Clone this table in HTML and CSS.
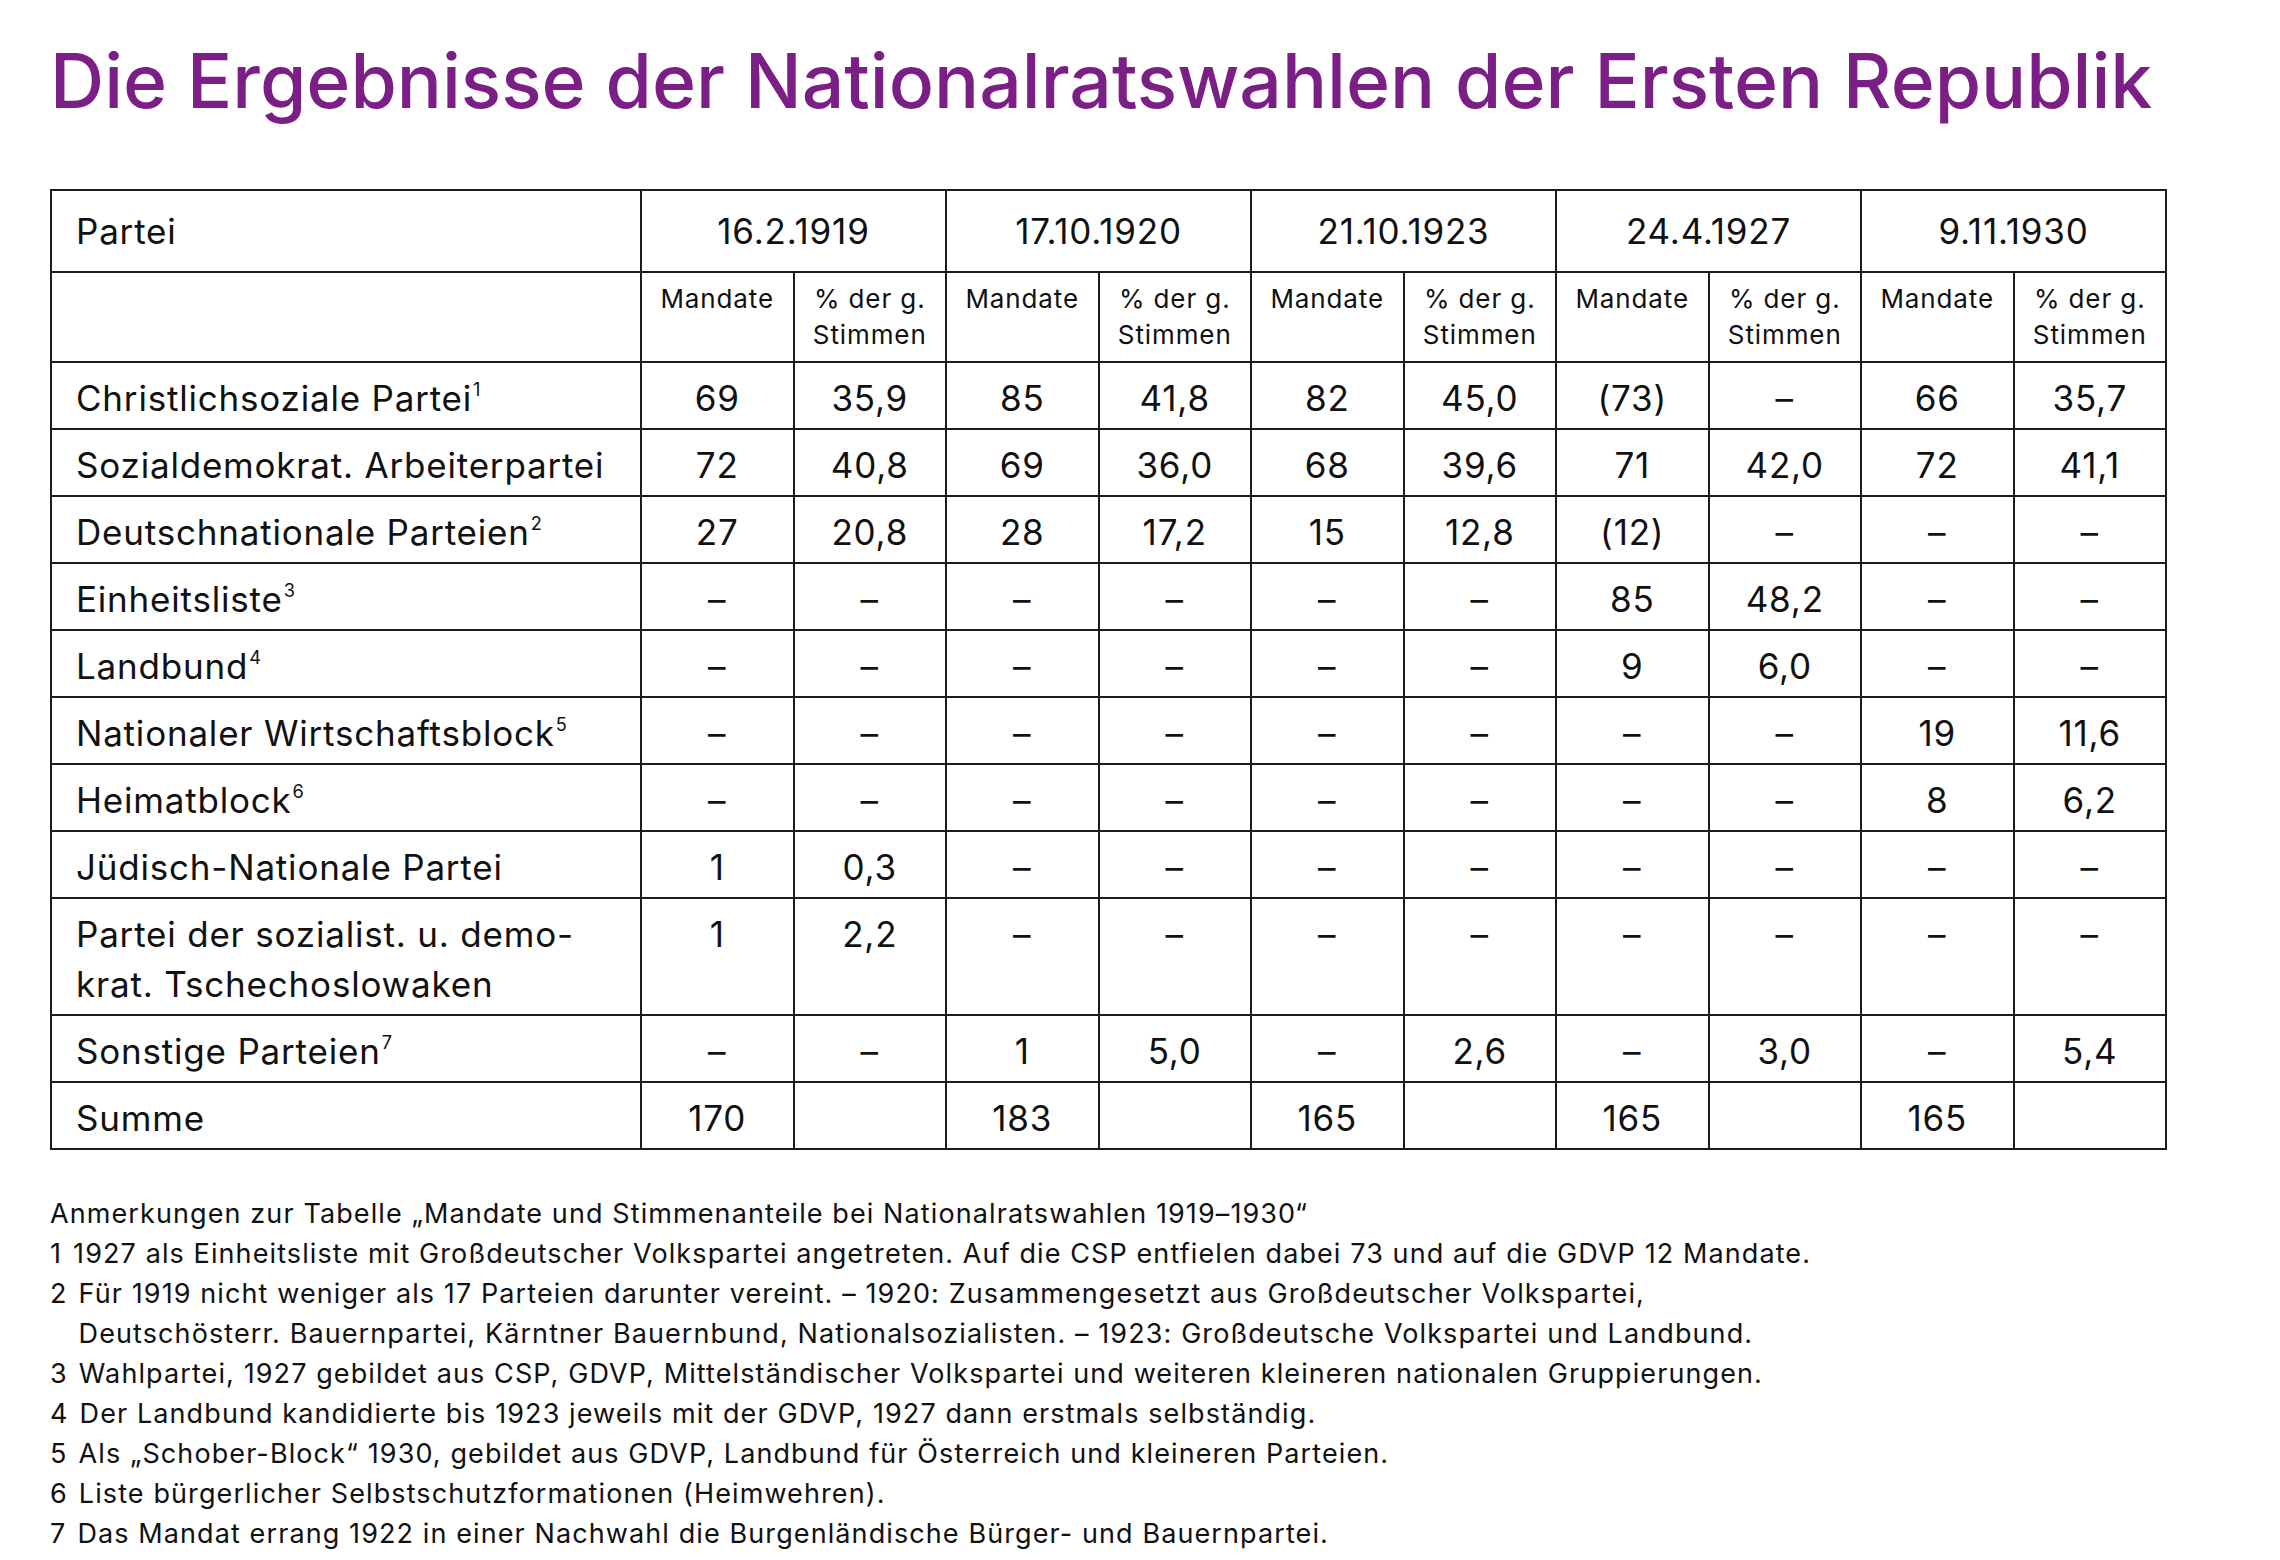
FILE: index.html
```html
<!DOCTYPE html>
<html lang="de">
<head>
<meta charset="utf-8">
<title>Die Ergebnisse der Nationalratswahlen der Ersten Republik</title>
<link rel="stylesheet" href="styles.css">
</head>
<body>
<main class="page">
  <h1 class="title">Die Ergebnisse der Nationalratswahlen der Ersten Republik</h1>

  <table class="results">
    <colgroup>
      <col class="col-party">
      <col><col><col><col><col><col><col><col><col><col>
    </colgroup>
    <thead>
      <tr class="row-dates">
        <th class="party">Partei</th>
        <th colspan="2">16.2.1919</th>
        <th colspan="2">17.10.1920</th>
        <th colspan="2">21.10.1923</th>
        <th colspan="2">24.4.1927</th>
        <th colspan="2">9.11.1930</th>
      </tr>
      <tr class="row-sub">
        <th class="party"></th>
        <th>Mandate</th><th>% der g.<br>Stimmen</th>
        <th>Mandate</th><th>% der g.<br>Stimmen</th>
        <th>Mandate</th><th>% der g.<br>Stimmen</th>
        <th>Mandate</th><th>% der g.<br>Stimmen</th>
        <th>Mandate</th><th>% der g.<br>Stimmen</th>
      </tr>
    </thead>
    <tbody>
      <tr>
        <td class="party">Christlichsoziale Partei<sup>1</sup></td>
        <td>69</td><td>35,9</td><td>85</td><td>41,8</td><td>82</td><td>45,0</td><td>(73)</td><td>–</td><td>66</td><td>35,7</td>
      </tr>
      <tr>
        <td class="party">Sozialdemokrat. Arbeiterpartei</td>
        <td>72</td><td>40,8</td><td>69</td><td>36,0</td><td>68</td><td>39,6</td><td>71</td><td>42,0</td><td>72</td><td>41,1</td>
      </tr>
      <tr>
        <td class="party">Deutschnationale Parteien<sup>2</sup></td>
        <td>27</td><td>20,8</td><td>28</td><td>17,2</td><td>15</td><td>12,8</td><td>(12)</td><td>–</td><td>–</td><td>–</td>
      </tr>
      <tr>
        <td class="party">Einheitsliste<sup>3</sup></td>
        <td>–</td><td>–</td><td>–</td><td>–</td><td>–</td><td>–</td><td>85</td><td>48,2</td><td>–</td><td>–</td>
      </tr>
      <tr>
        <td class="party">Landbund<sup>4</sup></td>
        <td>–</td><td>–</td><td>–</td><td>–</td><td>–</td><td>–</td><td>9</td><td>6,0</td><td>–</td><td>–</td>
      </tr>
      <tr>
        <td class="party">Nationaler Wirtschaftsblock<sup>5</sup></td>
        <td>–</td><td>–</td><td>–</td><td>–</td><td>–</td><td>–</td><td>–</td><td>–</td><td>19</td><td>11,6</td>
      </tr>
      <tr>
        <td class="party">Heimatblock<sup>6</sup></td>
        <td>–</td><td>–</td><td>–</td><td>–</td><td>–</td><td>–</td><td>–</td><td>–</td><td>8</td><td>6,2</td>
      </tr>
      <tr>
        <td class="party">Jüdisch-Nationale Partei</td>
        <td>1</td><td>0,3</td><td>–</td><td>–</td><td>–</td><td>–</td><td>–</td><td>–</td><td>–</td><td>–</td>
      </tr>
      <tr>
        <td class="party">Partei der sozialist. u. demo-<br>krat. Tschechoslowaken</td>
        <td>1</td><td>2,2</td><td>–</td><td>–</td><td>–</td><td>–</td><td>–</td><td>–</td><td>–</td><td>–</td>
      </tr>
      <tr>
        <td class="party">Sonstige Parteien<sup>7</sup></td>
        <td>–</td><td>–</td><td>1</td><td>5,0</td><td>–</td><td>2,6</td><td>–</td><td>3,0</td><td>–</td><td>5,4</td>
      </tr>
      <tr>
        <td class="party">Summe</td>
        <td>170</td><td></td><td>183</td><td></td><td>165</td><td></td><td>165</td><td></td><td>165</td><td></td>
      </tr>
    </tbody>
  </table>

  <section class="notes">
    <p class="notes-title">Anmerkungen zur Tabelle „Mandate und Stimmenanteile bei Nationalratswahlen 1919–1930“</p>
    <ol class="notes-list">
      <li><span class="num">1</span><span class="txt">1927 als Einheitsliste mit Großdeutscher Volkspartei angetreten. Auf die CSP entfielen dabei 73 und auf die GDVP 12 Mandate.</span></li>
      <li><span class="num">2</span><span class="txt">Für 1919 nicht weniger als 17 Parteien darunter vereint. – 1920: Zusammengesetzt aus Großdeutscher Volkspartei,<br>Deutschösterr. Bauernpartei, Kärntner Bauernbund, Nationalsozialisten. – 1923: Großdeutsche Volkspartei und Landbund.</span></li>
      <li><span class="num">3</span><span class="txt">Wahlpartei, 1927 gebildet aus CSP, GDVP, Mittelständischer Volkspartei und weiteren kleineren nationalen Gruppierungen.</span></li>
      <li><span class="num">4</span><span class="txt">Der Landbund kandidierte bis 1923 jeweils mit der GDVP, 1927 dann erstmals selbständig.</span></li>
      <li><span class="num">5</span><span class="txt">Als „Schober-Block“ 1930, gebildet aus GDVP, Landbund für Österreich und kleineren Parteien.</span></li>
      <li><span class="num">6</span><span class="txt">Liste bürgerlicher Selbstschutzformationen (Heimwehren).</span></li>
      <li><span class="num">7</span><span class="txt">Das Mandat errang 1922 in einer Nachwahl die Burgenländische Bürger- und Bauernpartei.</span></li>
    </ol>
  </section>
</main>
</body>
</html>
```

FILE: styles.css
```css
html, body {
  margin: 0;
  padding: 0;
  background: #ffffff;
}

body {
  font-family: "Inter", "Liberation Sans", sans-serif;
  color: #111111;
}

.page {
  padding: 37px 0 0 50px;
  width: 2117px;
}

.title {
  margin: 0;
  font-size: 75px;
  font-weight: 500;
  line-height: 88px;
  letter-spacing: 0;
  color: #7b1f86;
}

.results {
  margin-top: 64px;
  width: 2117px;
  table-layout: fixed;
  border-collapse: collapse;
  font-size: 35px;
  letter-spacing: 0.8px;
}

.col-party {
  width: 590px;
}

.results th,
.results td {
  border: 2px solid #1c1c1c;
  text-align: center;
  font-weight: 400;
  padding: 0;
}

.row-dates th {
  height: 80px;
  vertical-align: middle;
  font-size: 35px;
}

.row-sub th {
  height: 80px;
  vertical-align: top;
  font-size: 26px;
  line-height: 36px;
  padding: 8px 0 0;
  letter-spacing: 0.9px;
}

.results td {
  vertical-align: top;
  line-height: 50px;
  padding: 10px 0 5px;
}

.results .party {
  text-align: left;
  padding-left: 24px;
}

.results sup {
  font-size: 0.52em;
  line-height: 0;
  vertical-align: 0.8em;
  margin-left: 1px;
  letter-spacing: 0;
}

.notes {
  margin-top: 44px;
  font-size: 27px;
  line-height: 40px;
  letter-spacing: 1.1px;
}

.notes-title {
  margin: 0;
}

.notes-list {
  list-style: none;
  margin: 0;
  padding: 0;
}

.notes-list li {
  display: flex;
  gap: 11px;
}

.notes-list .num {
  flex: none;
}
```
